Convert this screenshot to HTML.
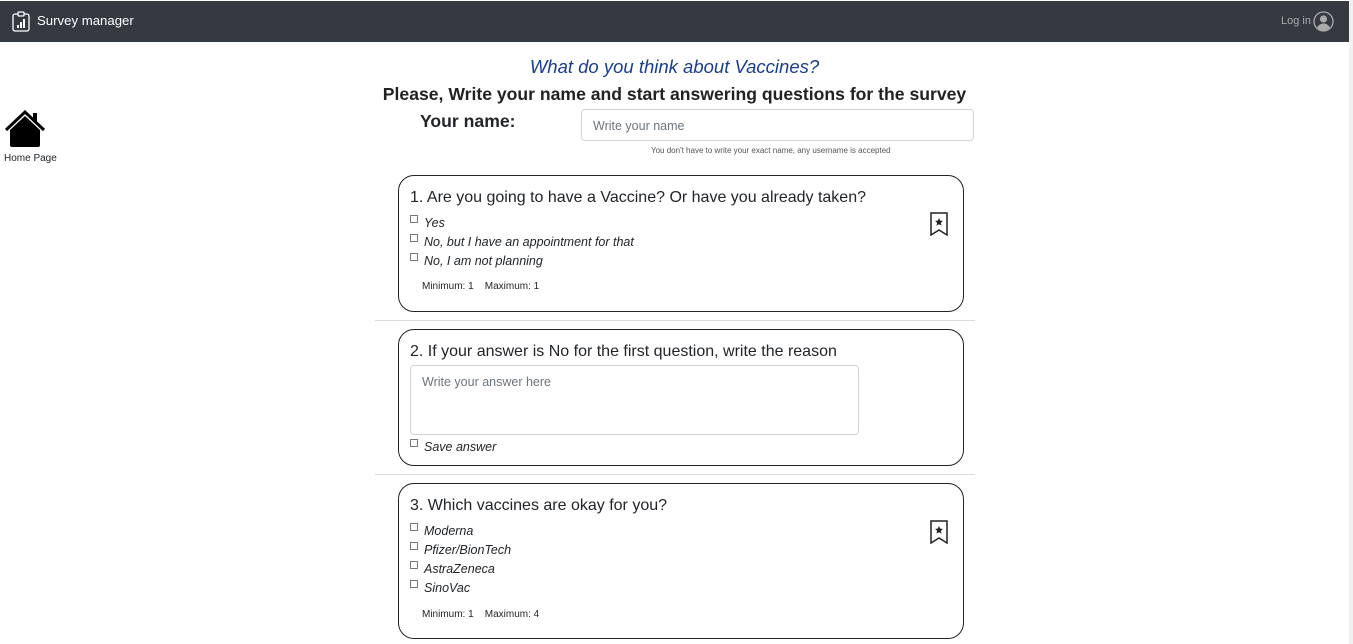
<!DOCTYPE html>
<html><head><meta charset="utf-8"><style>
*{box-sizing:border-box;margin:0;padding:0}
body{width:1353px;height:644px;overflow:hidden;background:#fff;font-family:"Liberation Sans",sans-serif;color:#212529;position:relative}
.nav{position:absolute;left:0;top:1px;width:1349px;height:41px;background:#343a40}
.sb{position:absolute;right:0;top:0;width:4px;height:644px;background:#f1f1f1}
.a{position:absolute;white-space:nowrap}
.card{position:absolute;left:398px;width:566px;border:1px solid #222;border-radius:16px}
.hr{position:absolute;left:375px;width:600px;height:1px;background:#ddd}
.q{font-size:16px;position:absolute;left:11px;top:13px;white-space:nowrap}
.opt{position:absolute;left:11px;font-size:12.5px;font-style:italic;white-space:nowrap}
.opt i{display:inline-block;width:8px;height:8px;border:1px solid #777;margin-right:6px;vertical-align:4px}
.mm{position:absolute;left:23px;font-size:10px;white-space:nowrap}
.bm{position:absolute;right:15px;top:36px}
</style></head><body>
<div class="nav">
<svg class="a" style="left:12px;top:10px" width="18" height="21" viewBox="0 0 18 21"><rect x="1" y="3" width="16" height="17" rx="2" fill="none" stroke="#fff" stroke-width="1.3"/><rect x="6" y="1" width="6" height="4" rx="1" fill="#343a40" stroke="#fff" stroke-width="1.3"/><rect x="5" y="14" width="2" height="3" fill="#fff"/><rect x="8" y="11" width="2" height="6" fill="#fff"/><rect x="11" y="8" width="2" height="9" fill="#fff"/></svg>
<div class="a" style="left:37px;top:12px;color:#fff;font-size:13.2px">Survey manager</div>
<div class="a" style="left:1281px;top:14px;color:#aaa;font-size:11px">Log in</div>
<svg class="a" style="left:1313px;top:10px" width="21" height="21" viewBox="0 0 21 21"><circle cx="10.5" cy="10.5" r="9.5" fill="none" stroke="#aaa" stroke-width="1.3"/><circle cx="10.5" cy="8" r="3.6" fill="#aaa"/><path d="M4 16.5c2-3 4-4 6.5-4s4.5 1 6.5 4c-2 2-4 3-6.5 3s-4.5-1-6.5-3z" fill="#aaa"/></svg>
</div>
<div class="sb"></div>
<svg class="a" style="left:4px;top:110px" width="42" height="38" viewBox="0 0 42 38"><path d="M2 20L21 2l19 18" fill="none" stroke="#000" stroke-width="3"/><rect x="29" y="3" width="4" height="9" fill="#000"/><path d="M6 20L21 6l15 14v15a2 2 0 0 1-2 2H8a2 2 0 0 1-2-2z" fill="#000"/></svg>
<div class="a" style="left:4px;top:153px;font-size:10px">Home Page</div>
<div class="a" style="left:0;width:1349px;text-align:center;top:56px;font-size:18.5px;font-style:italic;color:#1a3e8c">What do you think about Vaccines?</div>
<div class="a" style="left:0;width:1349px;text-align:center;top:84px;font-size:17.6px;font-weight:bold;color:#222">Please, Write your name and start answering questions for the survey</div>
<div class="a" style="left:420px;top:111px;font-size:17.6px;font-weight:bold">Your name:</div>
<div class="a" style="left:581px;top:109px;width:393px;height:32px;border:1px solid #ced4da;border-radius:4px;padding:9px 11px;font-size:12.5px;color:#6c757d">Write your name</div>
<div class="a" style="left:651px;top:146px;font-size:8px;color:#555">You don't have to write your exact name, any username is accepted</div>

<div class="card" style="top:175px;height:137px">
<div class="q">1. Are you going to have a Vaccine? Or have you already taken?</div>
<div class="opt" style="top:39px"><i></i>Yes</div>
<div class="opt" style="top:58px"><i></i>No, but I have an appointment for that</div>
<div class="opt" style="top:77px"><i></i>No, I am not planning</div>
<div class="mm" style="top:105px">Minimum: 1 &nbsp; &nbsp;Maximum: 1</div>
<svg class="bm" width="18" height="24" viewBox="0 0 18 24"><path d="M1 1h16v22l-8-5-8 5z" fill="none" stroke="#222" stroke-width="1.5"/><path d="M9 6l1.2 2.6 2.8.3-2.1 1.9.6 2.8L9 12.2l-2.5 1.4.6-2.8L5 8.9l2.8-.3z" fill="#222"/></svg>
</div>
<div class="hr" style="top:320px"></div>
<div class="card" style="top:329px;height:137px">
<div class="q">2. If your answer is No for the first question, write the reason</div>
<div class="a" style="left:11px;top:35px;width:449px;height:70px;border:1px solid #ced4da;border-radius:4px;padding:9px 11px;font-size:12.5px;color:#6c757d">Write your answer here</div>
<div class="opt" style="top:109px"><i></i>Save answer</div>
</div>
<div class="hr" style="top:474px"></div>
<div class="card" style="top:483px;height:156px">
<div class="q">3. Which vaccines are okay for you?</div>
<div class="opt" style="top:39px"><i></i>Moderna</div>
<div class="opt" style="top:58px"><i></i>Pfizer/BionTech</div>
<div class="opt" style="top:77px"><i></i>AstraZeneca</div>
<div class="opt" style="top:96px"><i></i>SinoVac</div>
<div class="mm" style="top:125px">Minimum: 1 &nbsp; &nbsp;Maximum: 4</div>
<svg class="bm" width="18" height="24" viewBox="0 0 18 24"><path d="M1 1h16v22l-8-5-8 5z" fill="none" stroke="#222" stroke-width="1.5"/><path d="M9 6l1.2 2.6 2.8.3-2.1 1.9.6 2.8L9 12.2l-2.5 1.4.6-2.8L5 8.9l2.8-.3z" fill="#222"/></svg>
</div>
</body></html>
